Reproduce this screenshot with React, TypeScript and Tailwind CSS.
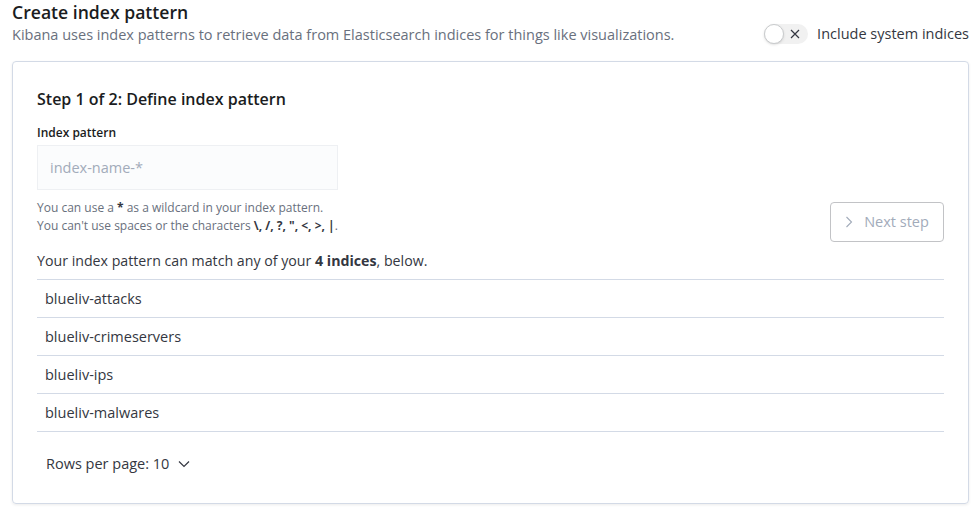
const rows = ["blueliv-attacks", "blueliv-crimeservers", "blueliv-ips", "blueliv-malwares"];

export default function App() {
  return (
    <div className="w-[979px] h-[518px] bg-white text-[#343741] font-['Open_Sans',sans-serif] overflow-hidden">
      <div className="flex items-end justify-between pl-3 pr-[10px] pt-0">
        <div>
          <h1 className="text-[17.6px] leading-[24px] font-semibold text-[#1a1c21]">Create index pattern</h1>
          <p className="text-[14.5px] leading-[22px] text-[#69707d]">
            Kibana uses index patterns to retrieve data from Elasticsearch indices for things like visualizations.
          </p>
        </div>
        <div className="flex items-center gap-[9px] mb-[1px]">
          <div className="relative w-[44px] h-[20px] rounded-full bg-[#f1f1f1] flex items-center">
            <div className="absolute left-0 top-0 w-[20px] h-[20px] rounded-full bg-white border border-[#c9cbcd] shadow-sm" />
            <svg className="absolute left-[26px] top-[5px]" width="10" height="10" viewBox="0 0 10 10">
              <path d="M1 1L9 9M9 1L1 9" stroke="#343741" strokeWidth="1.2" />
            </svg>
          </div>
          <span className="text-[14.5px] text-[#343741]">Include system indices</span>
        </div>
      </div>

      <div className="mx-3 mt-[15px] w-[957px] h-[443px] border border-[#d3dae6] rounded-[4px] shadow-[0_1px_3px_rgba(0,0,0,0.08)] px-6 pt-[27px]">
        <h2 className="text-[16px] leading-[20px] font-semibold text-[#1a1c21]">Step 1 of 2: Define index pattern</h2>

        <div className="flex justify-between items-start mt-[16px]">
          <div>
            <div className="text-[12px] leading-[16px] font-semibold text-[#1a1c21]">Index pattern</div>
            <div className="mt-[4px] w-[301px] h-[45px] bg-[#fbfcfd] border border-[#eef0f3] flex items-center px-3">
              <span className="text-[14.5px] text-[#a2abba]">index-name-*</span>
            </div>
            <div className="mt-[9px] text-[12px] leading-[18px] text-[#69707d]">
              <div>
                You can use a <b className="font-bold text-[#343741]">*</b> as a wildcard in your index pattern.
              </div>
              <div>
                You can't use spaces or the characters{" "}
                <b className="font-bold text-[#343741]">\, /, ?, ", &lt;, &gt;, |</b>.
              </div>
            </div>
          </div>
          <button className="mt-[77px] w-[114px] h-[40px] border border-[#c2c3c6] rounded-[4px] flex items-center justify-center gap-[11px] text-[14.5px] text-[#a2abba]">
            <svg width="8" height="12" viewBox="0 0 8 12">
              <path d="M1.5 1L6.5 6L1.5 11" stroke="#a2abba" strokeWidth="1.1" fill="none" />
            </svg>
            Next step
          </button>
        </div>

        <p className="mt-[9px] text-[14.2px] leading-[20px] text-[#343741]">
          Your index pattern can match any of your <b className="font-bold">4 indices</b>, below.
        </p>

        <div className="mt-[8px] border-t border-[#d3dae6]">
          {rows.map((r) => (
            <div key={r} className="h-[38px] border-b border-[#d3dae6] flex items-center px-2 text-[14.5px] text-[#343741]">
              {r}
            </div>
          ))}
        </div>

        <div className="mt-[21px] ml-[9px] flex items-center gap-[9px] text-[14.5px] text-[#343741]">
          Rows per page: 10
          <svg width="12" height="8" viewBox="0 0 12 8">
            <path d="M1 1.5L6 6.5L11 1.5" stroke="#343741" strokeWidth="1.2" fill="none" />
          </svg>
        </div>
      </div>
    </div>
  );
}
